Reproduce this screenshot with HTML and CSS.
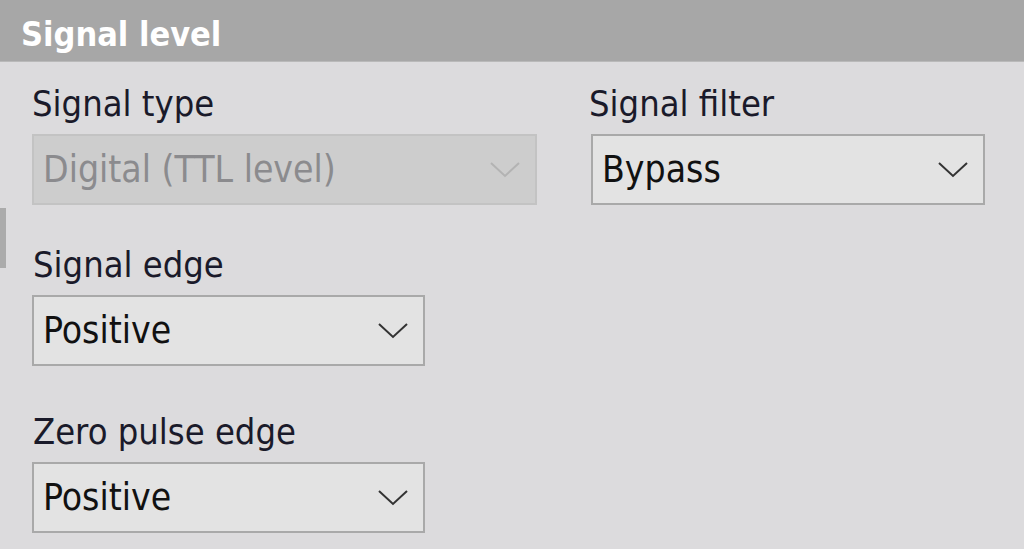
FILE: index.html
```html
<!DOCTYPE html>
<html>
<head>
<meta charset="utf-8">
<link rel="stylesheet" href="styles.css">
</head>
<body>
<div class="header">Signal level</div>
<div class="edge-bar"></div>
<div class="content">
  <div class="row top-row">
    <div class="field wide">
      <div class="label">Signal type</div>
      <div class="select disabled">
        <span class="value">Digital (TTL level)</span>
        <svg class="chev" viewBox="0 0 30 16"><path d="M1 1 L15 14 L29 1" fill="none" stroke-width="2"/></svg>
      </div>
    </div>
    <div class="field filter">
      <div class="label">Signal filter</div>
      <div class="select">
        <span class="value">Bypass</span>
        <svg class="chev" viewBox="0 0 30 16"><path d="M1 1 L15 14 L29 1" fill="none" stroke-width="2"/></svg>
      </div>
    </div>
  </div>
  <div class="field narrow edge">
    <div class="label">Signal edge</div>
    <div class="select">
      <span class="value">Positive</span>
      <svg class="chev" viewBox="0 0 30 16"><path d="M1 1 L15 14 L29 1" fill="none" stroke-width="2"/></svg>
    </div>
  </div>
  <div class="field narrow zero">
    <div class="label">Zero pulse edge</div>
    <div class="select">
      <span class="value">Positive</span>
      <svg class="chev" viewBox="0 0 30 16"><path d="M1 1 L15 14 L29 1" fill="none" stroke-width="2"/></svg>
    </div>
  </div>
</div>
</body>
</html>
```
FILE: styles.css
```css
html, body {
  margin: 0;
  padding: 0;
}
body {
  width: 1024px;
  height: 549px;
  overflow: hidden;
  background: #dcdbdd;
  font-family: "DejaVu Sans Condensed", "DejaVu Sans", sans-serif;
  position: relative;
}
.header {
  height: 62px;
  box-sizing: border-box;
  background: #a7a7a7;
  color: #ffffff;
  font-weight: bold;
  font-size: 34px;
  line-height: 56px;
  padding: 6px 0 0 21px;
  border-bottom: 1px solid #b9b9b9;
}
.edge-bar {
  position: absolute;
  left: 0;
  top: 208px;
  width: 6px;
  height: 60px;
  background: #ababab;
}
.content {
  padding: 12px 0 0 32px;
  display: flex;
  flex-direction: column;
}
.top-row {
  display: flex;
  gap: 54px;
}
.field {
  display: flex;
  flex-direction: column;
}
.label {
  font-size: 36px;
  line-height: 60px;
  color: #1a1a2a;
}
.wide { width: 505px; }
.filter { width: 394px; }
.filter .label { margin-left: -2px; }
.narrow { width: 393px; }
.edge { margin-top: 30px; }
.edge .label, .zero .label { margin-left: 1px; }
.zero { margin-top: 36px; }
.select {
  height: 71px;
  box-sizing: border-box;
  border: 2px solid #a9a9a9;
  background: #e3e3e3;
  display: flex;
  align-items: center;
  justify-content: space-between;
  padding: 0 15px 0 9px;
  font-size: 37px;
  color: #111;
}
.select.disabled {
  background: #cdcdcd;
  border-color: #c3c3c3;
  color: #8b8b8e;
}
.chev {
  width: 30px;
  height: 16px;
  stroke: #333;
}
.disabled .chev {
  stroke: #b3b3b3;
}
```
